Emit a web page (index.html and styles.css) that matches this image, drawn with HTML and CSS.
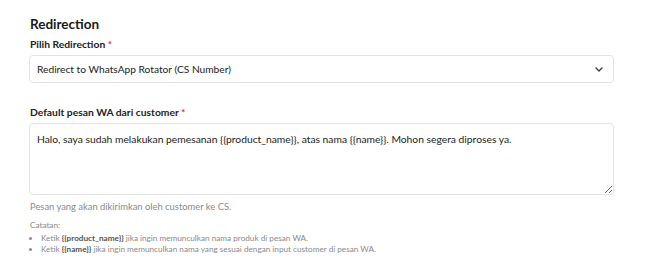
FILE: index.html
```html
<!DOCTYPE html>
<html lang="id">
<head>
    <meta charset="UTF-8">
    <meta name="viewport" content="width=device-width, initial-scale=1.0">
    <title>Redirection</title>
    <link rel="stylesheet" href="styles.css">
</head>
<body>

    <div class="section">
        <h3 class="section-title">Redirection</h3>

        <div class="field">
            <label class="field-label">Pilih Redirection <span class="req">*</span></label>
            <div class="select">
                <span>Redirect to WhatsApp Rotator (CS Number)</span>
                <svg class="chevron" width="8" height="5" viewBox="0 0 8 5">
                    <path d="M1 1l3 3 3-3" fill="none" stroke="#3a3a3a" stroke-width="1.4" stroke-linecap="round" stroke-linejoin="round"/>
                </svg>
            </div>
        </div>

        <div class="field field-wa">
            <label class="field-label">Default pesan WA dari customer <span class="req">*</span></label>
            <textarea class="textarea">Halo, saya sudah melakukan pemesanan {{product_name}}, atas nama {{name}}. Mohon segera diproses ya.</textarea>
            <p class="help">Pesan yang akan dikirimkan oleh customer ke CS.</p>

            <div class="notes">
                <p>Catatan:</p>
                <ul>
                    <li>Ketik <b>{{product_name}}</b> jika ingin memunculkan nama produk di pesan WA.</li>
                    <li>Ketik <b>{{name}}</b> jika ingin memunculkan nama yang sesuai dengan input customer di pesan WA.</li>
                </ul>
            </div>
        </div>
    </div>

</body>
</html>
```

FILE: styles.css
```css
/* General */
body {
    margin: 0;
    background: #fff;
    color: #1f1f1f;
    font-family: Lato, "Noto Sans", sans-serif;
}

.section {
    width: 585px;
    padding: 14px 0 0 29px;
}

.section-title {
    font-size: 13.5px;
    font-weight: 700;
    margin: 0 0 2px 1px;
    line-height: 20px;
    color: #1a1a1a;
}

/* Fields */
.field-label {
    display: block;
    font-size: 10.3px;
    font-weight: 700;
    line-height: 16px;
    margin: 0 0 3px 1px;
    color: #222;
}

.req {
    color: #e0245e;
}

.select {
    display: flex;
    align-items: center;
    justify-content: space-between;
    height: 26px;
    padding: 0 10px 0 7px;
    border: 1px solid #e3e3e3;
    border-radius: 4px;
    font-size: 10.2px;
    color: #222;
}

.chevron {
    display: block;
}

.field-wa {
    margin-top: 21px;
}

.textarea {
    display: block;
    box-sizing: border-box;
    width: 100%;
    height: 72px;
    margin: 0;
    padding: 7px 7px;
    border: 1px solid #e3e3e3;
    border-radius: 4px;
    font-family: inherit;
    font-size: 10.3px;
    line-height: 16px;
    color: #222;
    resize: vertical;
    outline: none;
}

.help {
    margin: 5px 0 0 1px;
    font-size: 9.4px;
    line-height: 14px;
    color: #8a8a8a;
}

/* Notes */
.notes {
    margin-top: 6px;
    font-size: 8.2px;
    line-height: 11px;
    color: #8a8a8a;
}

.notes p {
    margin: 0 0 2px 1px;
}

.notes ul {
    margin: 0;
    padding-left: 12px;
}

.notes b {
    color: #555;
}
```
